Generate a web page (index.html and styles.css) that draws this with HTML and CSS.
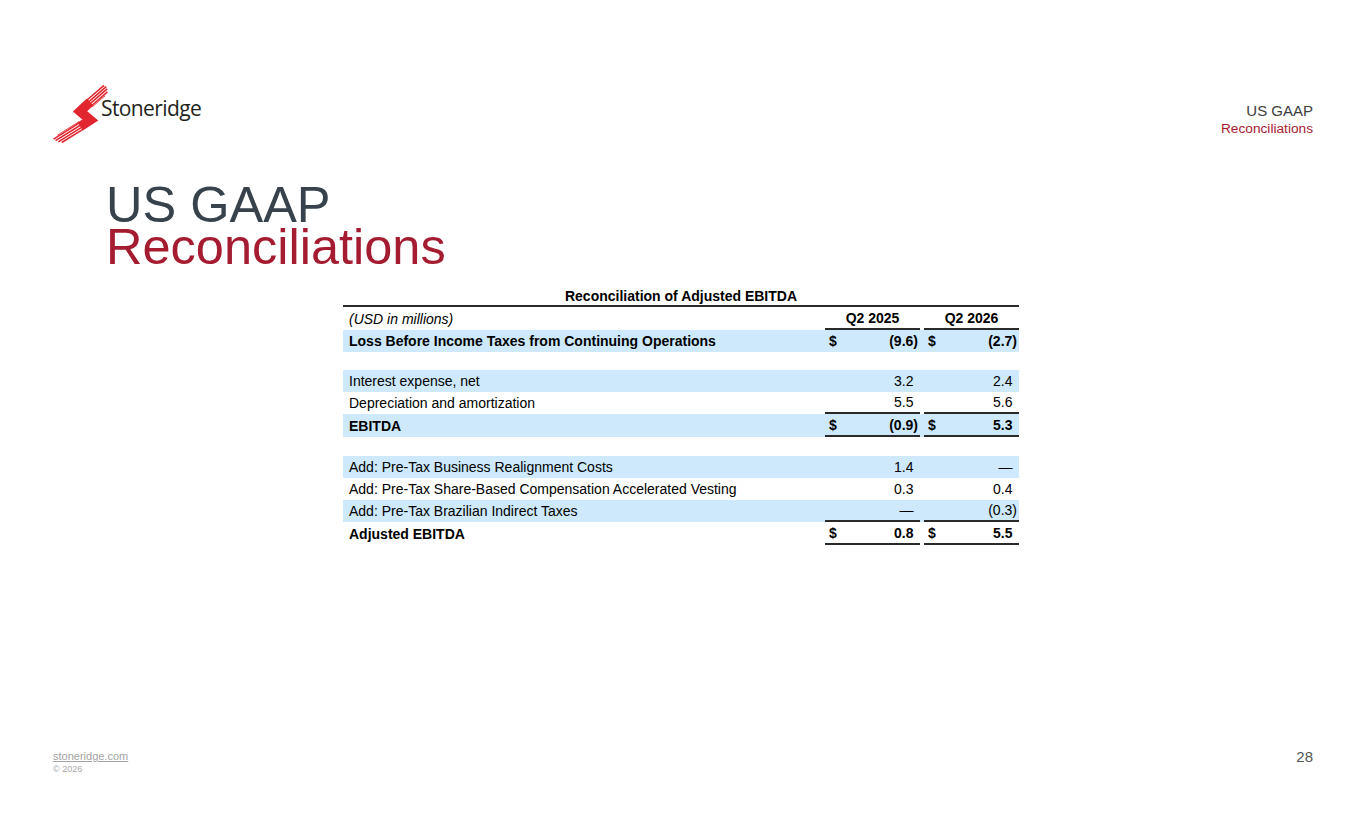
FILE: index.html
```html
<!DOCTYPE html>
<html lang="en">
<head>
<meta charset="utf-8">
<title>US GAAP Reconciliations</title>
<link rel="stylesheet" href="styles.css">
</head>
<body>
<div class="page">
  <header class="header">
    <div class="logo">
      <svg class="swoosh" width="64" height="76" viewBox="48 76 64 76" aria-hidden="true">
        <g transform="translate(80 114) scale(0.86) translate(-80 -114)">
          <path d="M91.7 100.1 L80 111 L92 121 L80.3 128.6" fill="none" stroke="#e1262f" stroke-width="11" stroke-linejoin="miter" stroke-miterlimit="10"/>
          <g transform="translate(80 111) rotate(-41)" fill="#e1262f">
            <rect x="14" y="-5.5" width="27" height="1.8"/>
            <rect x="14" y="-2.7" width="28" height="1.8"/>
            <rect x="14" y="0.1" width="27" height="1.8"/>
            <rect x="14" y="2.9" width="25" height="1.8"/>
            <rect x="14" y="4.9" width="20" height="0.8"/>
          </g>
          <g transform="translate(92 121) rotate(148)" fill="#e1262f">
            <rect x="12" y="-5.5" width="30" height="1.8"/>
            <rect x="12" y="-2.7" width="33" height="1.8"/>
            <rect x="12" y="0.1" width="35" height="1.8"/>
            <rect x="12" y="2.9" width="36" height="1.8"/>
            <rect x="12" y="4.9" width="30" height="0.8"/>
          </g>
        </g>
      </svg>
      <span class="wordmark">Stoneridge</span>
    </div>
    <div class="crumb">
      <div class="crumb-main">US GAAP</div>
      <div class="crumb-sub">Reconciliations</div>
    </div>
  </header>

  <h1 class="title">
    <span class="title-main">US GAAP</span>
    <span class="title-sub">Reconciliations</span>
  </h1>

  <div class="recon">
    <div class="row cap"><div class="lbl center">Reconciliation of Adjusted EBITDA</div></div>
    <div class="row hdr">
      <div class="lbl it">(USD in millions)</div>
      <div class="val ul hd">Q2 2025</div><div class="gap"></div>
      <div class="val ul hd">Q2 2026</div>
    </div>
    <div class="row shade b">
      <div class="lbl">Loss Before Income Taxes from Continuing Operations</div>
      <div class="val"><span>$</span><span>(9.6)</span></div><div class="gap"></div>
      <div class="val"><span>$</span><span>(2.7)</span></div>
    </div>
    <div class="row blank"></div>
    <div class="row shade">
      <div class="lbl">Interest expense, net</div>
      <div class="val"><span></span><span class="np">3.2</span></div><div class="gap"></div>
      <div class="val"><span></span><span class="np">2.4</span></div>
    </div>
    <div class="row">
      <div class="lbl">Depreciation and amortization</div>
      <div class="val ul"><span></span><span class="np">5.5</span></div><div class="gap"></div>
      <div class="val ul"><span></span><span class="np">5.6</span></div>
    </div>
    <div class="row shade b tall">
      <div class="lbl">EBITDA</div>
      <div class="val ul"><span>$</span><span>(0.9)</span></div><div class="gap"></div>
      <div class="val ul"><span>$</span><span class="np">5.3</span></div>
    </div>
    <div class="row blank2"></div>
    <div class="row shade">
      <div class="lbl">Add: Pre-Tax Business Realignment Costs</div>
      <div class="val"><span></span><span class="np">1.4</span></div><div class="gap"></div>
      <div class="val"><span></span><span class="np">—</span></div>
    </div>
    <div class="row">
      <div class="lbl">Add: Pre-Tax Share-Based Compensation Accelerated Vesting</div>
      <div class="val"><span></span><span class="np">0.3</span></div><div class="gap"></div>
      <div class="val"><span></span><span class="np">0.4</span></div>
    </div>
    <div class="row shade">
      <div class="lbl">Add: Pre-Tax Brazilian Indirect Taxes</div>
      <div class="val ul"><span></span><span class="np">—</span></div><div class="gap"></div>
      <div class="val ul"><span></span><span>(0.3)</span></div>
    </div>
    <div class="row b tall">
      <div class="lbl">Adjusted EBITDA</div>
      <div class="val ul"><span>$</span><span class="np">0.8</span></div><div class="gap"></div>
      <div class="val ul"><span>$</span><span class="np">5.5</span></div>
    </div>
  </div>

  <footer class="footer">
    <div class="foot-left">
      <a class="site" href="#">stoneridge.com</a>
      <div class="copy">© 2026</div>
    </div>
    <div class="pagenum">28</div>
  </footer>
</div>
</body>
</html>
```

FILE: styles.css
```css
* { box-sizing: border-box; }
html, body { margin: 0; padding: 0; background: #fff; }
body { font-family: "Liberation Sans", Arial, sans-serif; color: #000; }

.page {
  width: 1365px;
  height: 829px;
  display: flex;
  flex-direction: column;
}

.header {
  display: flex;
  justify-content: space-between;
  align-items: flex-start;
  padding: 76px 52px 0 48px;
  height: 150px;
}
.logo { display: flex; align-items: flex-start; }
.swoosh { display: block; }
.wordmark {
  font-family: "Open Sans", "DejaVu Sans", sans-serif;
  font-size: 21px;
  letter-spacing: -0.6px;
  color: #231f20;
  margin-left: -11px;
  margin-top: 18px;
  line-height: 28px;
}
.crumb { text-align: right; margin-top: 26px; }
.crumb-main { font-size: 15px; line-height: 18px; color: #3d3d3d; }
.crumb-sub { font-size: 13.7px; line-height: 17px; color: #a6192e; }

.title {
  margin: 34px 0 0 106px;
  font-weight: normal;
  font-size: 50.5px;
  line-height: 42px;
  display: flex;
  flex-direction: column;
}
.title-main { color: #37424c; }
.title-sub { color: #a51c30; }

.recon {
  margin: 18px 0 0 343px;
  width: 676px;
  font-size: 14px;
  color: #000;
}
.row {
  display: grid;
  grid-template-columns: 482px 95px 4px 95px;
  height: 22px;
  align-items: stretch;
}
.row.shade { background: #cde9fb; }
.row.b { font-weight: bold; }
.row.tall { height: 23px; }
.row.blank { height: 18px; }
.row.blank2 { height: 19px; }
.row.cap {
  grid-template-columns: 1fr;
  height: 21px;
  border-bottom: 2px solid #2a2a2a;
  font-weight: bold;
}
.row.hdr { height: 23px; }

.lbl {
  padding-left: 6px;
  display: flex;
  align-items: center;
  white-space: nowrap;
}
.lbl.center { justify-content: center; padding-left: 0; }
.lbl.it { font-style: italic; }

.val {
  display: flex;
  justify-content: space-between;
  align-items: center;
  padding: 0 2px 0 4px;
  white-space: nowrap;
}
.val.hd { justify-content: center; font-weight: bold; padding: 0; }
.val.ul { border-bottom: 2px solid #2a2a2a; }
.np { padding-right: 4.5px; }

.footer {
  margin-top: auto;
  display: flex;
  justify-content: space-between;
  align-items: flex-start;
  padding: 0 52px 54px 53px;
}
.site {
  font-size: 11px;
  color: #a3a3a3;
  text-decoration: underline;
  line-height: 13px;
  display: block;
}
.copy { font-size: 9px; color: #a8a8a8; line-height: 12px; margin-top: 0; }
.pagenum { font-size: 15px; color: #555; line-height: 16px; margin-top: -1px; }
```
